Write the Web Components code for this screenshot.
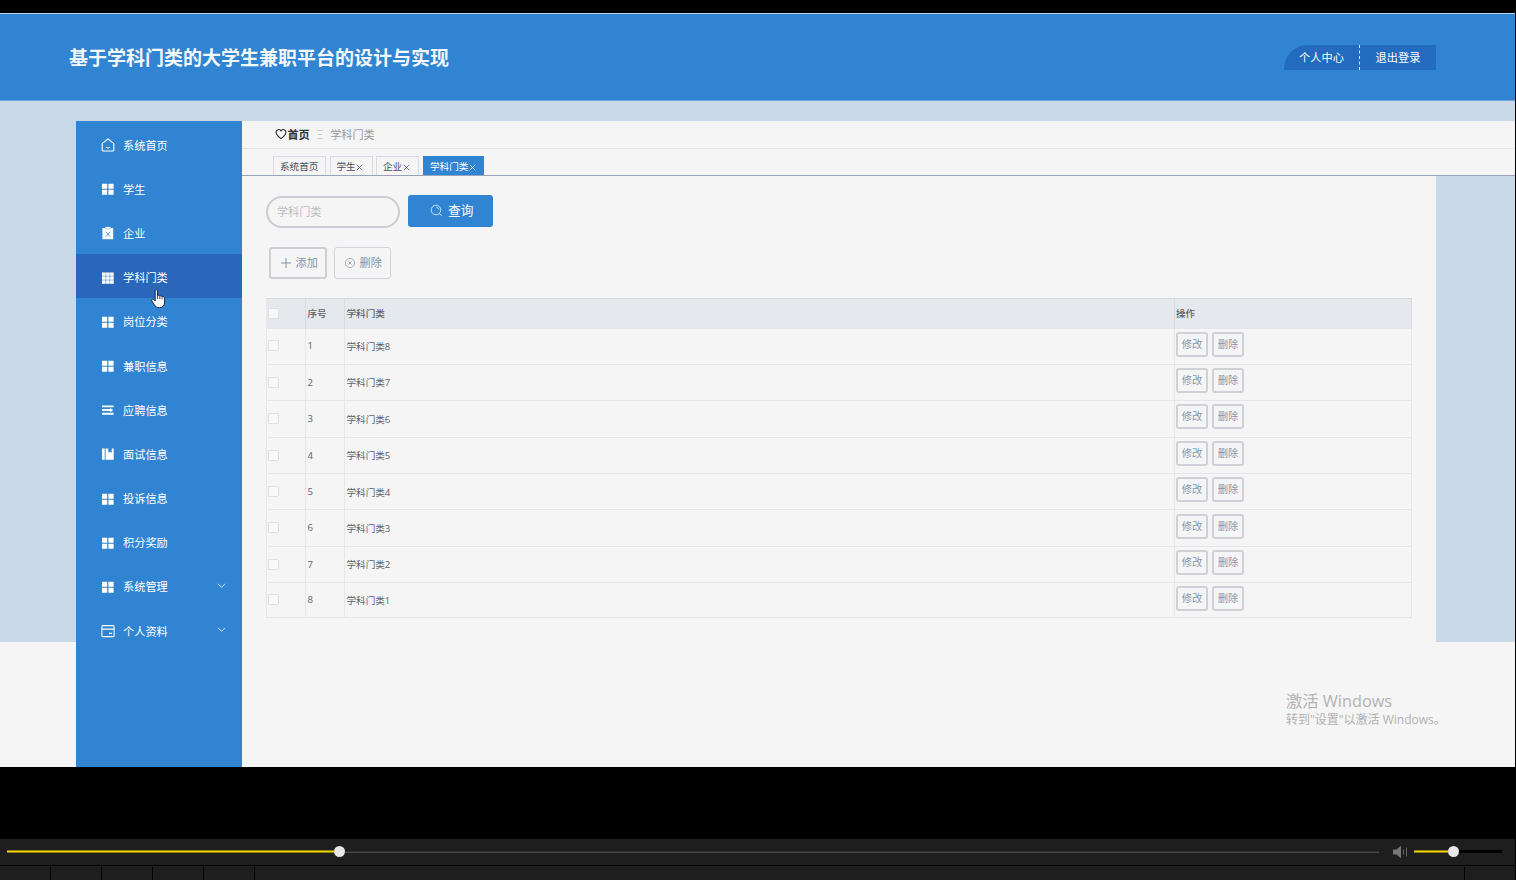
<!DOCTYPE html>
<html lang="zh-CN">
<head>
<meta charset="utf-8">
<title>基于学科门类的大学生兼职平台的设计与实现</title>
<style>
html,body{margin:0;padding:0;background:#000;overflow:hidden}
body{width:1516px;height:880px;font-family:"Open Sans","Noto Sans CJK SC",sans-serif}
</style>
</head>
<body>
<video-page></video-page>
<script>
const ICONS = {
  home: '<path d="M1.2 5.6 7 .9l5.800 4.700V12a1 1 0 0 1-1 1H2.200a1 1 0 0 1-1-1z" fill="none" stroke="#fff" stroke-width="1.100" stroke-linejoin="round"/><path d="M5 9.200q2 1.700 4 0" fill="none" stroke="#fff" stroke-width="1.100"/>',
  grid4: '<path fill="#fff" d="M1 1.700h5.200v5H1zM7.400 1.700h5.200v5H7.400zM1 7.800h5.200v5H1zM7.400 7.800h5.200v5H7.400z"/>',
  clip: '<path fill="#fff" d="M1.400 2h10.800v11.200H1.400z"/><path fill="#fff" d="M4.200.9h5.400v2H4.200z"/><path d="M4 2.900h6" stroke="#8fbce6" stroke-width=".7"/><path d="m4.600 5.700 4.600 5M9.200 5.700l-4.600 5" stroke="#4b90d2" stroke-width=".9"/>',
  grid9: '<path fill="#fff" d="M1 1.500h11.700v11.300H1z"/><path d="M4.850 1.500v11.300M8.800 1.500v11.300M1 5.200h11.700M1 9.100h11.700" stroke="#6794d3" stroke-width=".65"/>',
  operation: '<path fill="#fff" d="M1 2.400h11.600v1.900H1zM1 6.100h8.300V8H1zM1 9.800h11.600v1.900H1zM9 4.900l3.400 2.150L9 9.200z"/>',
  book: '<path fill="#fff" d="M1 1.600h2.700v11.200H1zM4.600 1.600h2.700v4.200l1.700-1 1.700 1V1.600h2v11.200H4.600z"/><path d="M3.700 1.600v11.200" stroke="#a3e1f4" stroke-width=".7"/>',
  card: '<rect x=".9" y="1.600" width="12.200" height="11" rx="1" fill="none" stroke="#fff" stroke-width="1.050"/><path d="M1 5.100h12M8 9.400h3" stroke="#fff" stroke-width="1.100"/>'
};
function define(name, css, html, setup){
  const tpl = document.createElement('template');
  tpl.innerHTML = '<style>:host,*{box-sizing:border-box}' + css + '</style>' + html;
  customElements.define(name, class extends HTMLElement{
    constructor(){
      super();
      this.attachShadow({mode:'open'}).append(tpl.content.cloneNode(true));
    }
    connectedCallback(){ if(setup) setup(this, this.shadowRoot); }
  });
}

define('app-header', `
:host{display:flex;justify-content:space-between;align-items:flex-start;height:88px;flex:none;background:#3184d1;border-top:1px solid #b9d3ea;border-bottom:1px solid #6fa5d8;padding:0 79px 0 69px;color:#fff}
h1{margin:0;padding-top:30px;font-size:19px;line-height:28px;font-weight:700;color:#f3f8fd;white-space:nowrap}
nav{display:flex;margin-top:30.500px;height:25px;background:#226bbe;border-radius:24px 0 0 0;overflow:hidden}
a{width:77px;text-align:center;font-size:11.200px;line-height:26px;height:25px}
a:first-child{width:75px}
a+a{border-left:1px dashed #d8e7f6}`,
`<h1>基于学科门类的大学生兼职平台的设计与实现</h1><nav><a>个人中心</a><a>退出登录</a></nav>`);

define('side-item', `
:host{display:flex;align-items:center;height:44.200px;padding:4px 15px 0 25px;color:#fff;font-size:11.200px}
:host([active]){background:#2a67bb}
svg{flex:none;width:14px;height:14px}
.icon{margin:-1px 0 0 -.5px}
span{margin-left:8.500px;flex:1;line-height:18px;white-space:nowrap}
.arrow{width:11px;height:11px;margin-top:-4px;display:none}
:host([sub]) .arrow{display:block}
:host([sub]){padding-top:4px}`,
`<svg class="icon" viewBox="0 0 14 14"></svg><span><slot></slot></span><svg class="arrow" viewBox="0 0 11 11"><path d="m2 3.800 3.500 3.500L9 3.800" fill="none" stroke="#d9e8f7" stroke-width="1"/></svg>`,
(el, root) => { root.querySelector('.icon').innerHTML = ICONS[el.getAttribute('icon')]; });

define('side-menu', `
:host{display:block;width:166px;background:#3184d1;flex:none;padding-top:.5px}`,
`<side-item icon="home">系统首页</side-item>
<side-item icon="grid4">学生</side-item>
<side-item icon="clip">企业</side-item>
<side-item icon="grid9" active>学科门类</side-item>
<side-item icon="grid4">岗位分类</side-item>
<side-item icon="grid4">兼职信息</side-item>
<side-item icon="operation">应聘信息</side-item>
<side-item icon="book">面试信息</side-item>
<side-item icon="grid4">投诉信息</side-item>
<side-item icon="grid4">积分奖励</side-item>
<side-item icon="grid4" sub>系统管理</side-item>
<side-item icon="card" sub>个人资料</side-item>`);

define('bread-crumb', `
:host{display:flex;align-items:center;height:28px;background:#f5f5f5;border-bottom:1px solid #e4e5e7;padding:0 0 1px 33px;font-size:11.100px;color:#999}
svg{width:12px;height:12px}
b{color:#303133;margin-left:.5px;font-weight:700}
.sep{width:6px;height:9px;margin:0 7.500px 0 7px}`,
`<svg viewBox="0 0 12 12"><path d="M6 10.600C3 8.500 1.100 6.700 1.100 4.300 1.100 1.400 4.400.7 6 2.800 7.600.7 10.900 1.400 10.900 4.300 10.900 6.700 9 8.500 6 10.600z" fill="none" stroke="#303133" stroke-width="1.100"/></svg><b>首页</b><svg class="sep" viewBox="0 0 6 9"><path d="M0 .5h6M1 4.500h4M0 8.500h6" stroke="#c3c6cc" stroke-width=".8"/></svg><span>学科门类</span>`);

define('page-tab', `
:host{display:flex;align-items:center;height:19px;border:1px solid #d8dce5;border-bottom:0;padding:2px 6px 0;font-size:9.600px;line-height:16px;color:#495060;white-space:nowrap}
:host([active]){background:#3184d1;border-color:#3184d1;color:#fff}
svg{display:none;width:7px;height:7px;margin:0 0 0 .5px}
:host([closable]) svg{display:block}`,
`<slot></slot><svg viewBox="0 0 7 7"><path d="m.8.8 5.400 5.400M6.200.8.8 6.200" stroke="currentColor" stroke-width=".75"/></svg>`);

define('tab-bar', `
:host{display:flex;align-items:flex-end;height:27px;background:#f5f5f5;border-bottom:1px solid #98a3b8;padding-left:31px}
.a{width:53px;margin-right:3.500px}.b{width:43px;margin-right:3.500px}.d{width:61px;margin-left:.5px}`,
`<page-tab class="a">系统首页</page-tab><page-tab class="b" closable>学生</page-tab><page-tab class="b" closable>企业</page-tab><page-tab class="d" closable active>学科门类</page-tab>`);

define('search-bar', `
:host{display:flex;align-items:flex-start}
.input{width:134px;height:32px;border:2px solid #cbccd2;border-radius:16px;padding-left:9px;font-size:11.100px;line-height:28px;color:#bbbdc3;margin-top:.500px}
.btn{display:flex;align-items:center;width:85px;height:32px;margin:-.1px 0 0 8px;padding-left:22px;background:#3184d1;border-radius:3px;color:#fff;font-size:12.700px;line-height:30px}
.btn span{margin-top:-2px}
svg{width:13px;height:13px;margin:-1px 5px 0 0}`,
`<div class="input">学科门类</div><div class="btn"><svg viewBox="0 0 13 13"><circle cx="6" cy="6" r="4.800" fill="none" stroke="#d8e8f8" stroke-width=".9"/><path d="M6.500 3.200a3 3 0 0 1 2.300 2.300M9 9.300l2.800 2.500" fill="none" stroke="#d8e8f8" stroke-width=".9"/></svg><span>查询</span></div>`);

define('tool-bar', `
:host{display:flex;padding-left:3px;gap:7px;color:#8594a9;font-size:11.200px}
div{display:flex;align-items:center;height:32px;border-radius:3px;padding-bottom:2px}
.add{width:58px;border:2px solid #cccdd5;padding-left:8.500px}
.del{width:57px;border:1px solid #d2d4dc;padding-left:8.500px}
svg{width:12px;height:12px;margin:1px 4px 0 0}`,
`<div class="add"><svg viewBox="0 0 12 12"><path d="M6 1v10M1 6h10" stroke="#8594a9"/></svg>添加</div>
<div class="del"><svg viewBox="0 0 12 12"><circle cx="6" cy="6" r="4.600" fill="none" stroke="#8f9cae" stroke-width=".8"/><path d="m4.500 4.500 3 3m0-3-3 3" stroke="#8f9cae" stroke-width=".9"/></svg>删除</div>`);

define('check-box', `:host{display:block;width:11px;height:11px;border:1px solid #dcdfe4;border-radius:1px;background:#f7f8f9}`, '');

define('small-button', `
:host{display:block;width:32px;height:25px;border:2px solid #d0d1d6;border-radius:3px;text-align:center;font-size:10.300px;line-height:20px;color:#8897ab}`, `<slot></slot>`);

define('data-table', `
:host{display:block;width:1146px;font-size:9.600px;color:#606266;border-top:1px solid #d4d7da;border-left:1px solid #e6e8ea}
.row{display:grid;grid-template-columns:39px 39px 830px 1fr;height:36.400px}
.row:last-child{height:35px}
.head{height:29.500px;background:#e5e8ed;font-weight:500}
.row>div{display:flex;align-items:center;border-right:1px solid #e5e7e9;border-bottom:1px solid #e5e7e9;padding-left:1.500px;min-width:0}
.head>div{border-right-color:#d8dbdf}
.row>div:nth-child(-n+3){padding-bottom:.5px}
.row>div:first-child{padding-left:1px}
.row .ops{align-items:flex-start;padding:3.200px 0 0 1px;gap:4px}
.head .ops{align-items:center;padding-top:0}`,
`<div class="row head"><div><check-box></check-box></div><div>序号</div><div>学科门类</div><div class="ops">操作</div></div>`,
(el, root) => {
  for(let i = 1; i <= 8; i++){
    const r = document.createElement('div');
    r.className = 'row';
    r.innerHTML = `<div><check-box></check-box></div><div>${i}</div><div>学科门类${9 - i}</div><div class="ops"><small-button>修改</small-button><small-button>删除</small-button></div>`;
    root.append(r);
  }
});

define('main-panel', `
:host{display:flex;flex-direction:column;flex:1;min-width:0}
.content{width:1194px;flex:1;background:#f5f5f5;padding:19.500px 0 0 24px}
tool-bar{margin-top:19px}
data-table{margin-top:19px}`,
`<bread-crumb></bread-crumb><tab-bar></tab-bar><div class="content"><search-bar></search-bar><tool-bar></tool-bar><data-table></data-table></div>`);

define('windows-notice', `
:host{display:block;color:#b2b2b2;white-space:nowrap}
.t{font-size:16.300px;line-height:20px}.s{font-size:12px;line-height:18px}`,
`<div class="t">激活 Windows</div><div class="s">转到"设置"以激活 Windows。</div>`);

define('admin-app', `
:host{display:flex;flex-direction:column;flex:none;position:relative;width:1515px;height:754px;background:linear-gradient(#c9d9e8 629px,#f5f5f5 629px)}
.body{display:flex;flex:1;padding:20px 0 0 76px}
windows-notice{position:absolute;left:1286px;top:678px}
.cursor{position:absolute;left:151px;top:276px;width:16px;height:20px}`,
`<app-header></app-header><div class="body"><side-menu></side-menu><main-panel></main-panel></div><windows-notice></windows-notice>
<svg class="cursor" viewBox="0 0 16 20"><path d="M4.200 1.800c0-1.500 2.300-1.500 2.300 0v5c.5-.8 2-.6 2.100.4.600-.7 2.300-.3 2.400.6.900-.6 2.600 0 2.600 1.200v4.200c0 3-1.700 5.500-5 5.500-2.800 0-4.200-.9-5.400-3.100L.8 11.800c-.7-1.400.9-2.300 2-1.300l1.400 1.500z" fill="#f8f8f8" stroke="#182642" stroke-width="1"/><path d="M6.500 7v3M8.800 7.500v2.500M11.100 8.200v2" stroke="#182642" stroke-width=".8"/></svg>`);

define('player-bar', `
:host{display:block;height:41px;width:1515px;flex:none;background:#1e1e1e}
.line{display:flex;align-items:center;height:27px;border-bottom:1px solid #000;padding:0 13px 1px 7px}
.fill{height:3px;background:linear-gradient(#96830c 1px,#ead000 1px,#ead000 2px,#96830c 2px)}
.seek{width:327px}.vol{width:34px}
.dot{width:11px;height:11px;border-radius:50%;background:#e8e8e8;flex:none}
.rest{width:1035px;height:2px;background:linear-gradient(#303030 1px,#464646 1px)}
.dark{width:43px;height:3px;background:#000}
svg{width:16px;height:14px;margin:0 6px 0 13px;flex:none}
.keys{display:flex;height:14px;padding-top:1px}
.keys i{width:51px;flex:none;border-right:1px solid #000}
.keys i:last-child{width:1210px}`,
`<div class="line"><div class="fill seek"></div><div class="dot"></div><div class="rest"></div><svg viewBox="0 0 16 14"><path d="M1 4.500h3.500L9 .8v12.400L4.500 9.500H1z" fill="#777"/><path d="M11.500 4.500v5M14.500 2.500v9" stroke="#666" stroke-width="1"/></svg><div class="fill vol"></div><div class="dot"></div><div class="dark"></div></div><div class="keys"><i></i><i></i><i></i><i></i><i></i><i></i></div>`);

define('video-page', `
:host{display:flex;flex-direction:column;width:1516px;height:880px;padding-top:13px;background:#000;justify-content:space-between}`,
`<admin-app></admin-app><player-bar></player-bar>`);
</script>
</body>
</html>
